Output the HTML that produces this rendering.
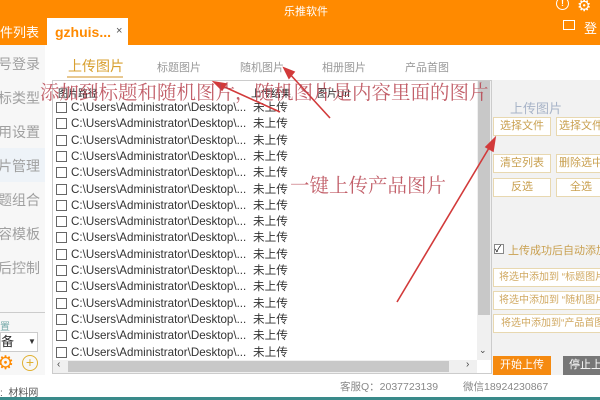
<!DOCTYPE html><html><head><meta charset="utf-8"><style>
*{margin:0;padding:0;box-sizing:border-box}
body{width:600px;height:400px;overflow:hidden;position:relative;background:#fff;font-family:"Liberation Sans","Noto Sans CJK SC",sans-serif;}
.a{position:absolute;white-space:nowrap}
.side{color:#a0a0a0;font-size:14px;left:-2px}
.st{font-size:11px;color:#999;top:59px}
.row{left:56px;font-size:11.6px;color:#333;height:16px;line-height:16px}
.cb{display:inline-block;width:11px;height:11px;border:1px solid #666;vertical-align:-2px;margin-right:4px;background:#fff}
.btn{position:absolute;border:1px solid #e8d8b0;background:#fff;color:#c9a050;font-size:11px;text-align:center;line-height:17px;height:19px;white-space:nowrap;overflow:hidden}
</style></head><body>
<div class="a" style="left:0;top:0;width:600px;height:45px;background:#ff8a00"></div>
<div class="a" style="left:284px;top:3px;color:#fff;font-size:11px">乐推软件</div>
<div class="a" style="left:0;top:22px;color:#fff;font-size:13px">件列表</div>
<div class="a" style="left:47px;top:18px;width:81px;height:27px;background:#fff"></div>
<div class="a" style="left:55px;top:24px;color:#ff8a00;font-size:14px;font-weight:bold">gzhuis...</div>
<div class="a" style="left:116px;top:25px;color:#555;font-size:11px">×</div>
<div class="a" style="left:556px;top:-3px;width:13px;height:13px;border:1.5px solid #fff;border-radius:50%;color:#fff;font-size:9px;text-align:center;line-height:10px;font-weight:bold">!</div>
<div class="a" style="left:577px;top:-4px;color:#fff;font-size:16px">⚙</div>
<div class="a" style="left:563px;top:20px;width:12px;height:10px;border:1.5px solid #fff"></div>
<div class="a" style="left:584px;top:18px;color:#fff;font-size:13px">登</div>
<div class="a" style="left:0;top:45px;width:45px;height:330px;background:#f7f7f7"></div>
<div class="a" style="left:0;top:148px;width:45px;height:34px;background:#eef3f8"></div>
<div class="a side" style="top:54px">号登录</div>
<div class="a side" style="top:88px">标类型</div>
<div class="a side" style="top:122px">用设置</div>
<div class="a side" style="top:156px">片管理</div>
<div class="a side" style="top:190px">题组合</div>
<div class="a side" style="top:224px">容模板</div>
<div class="a side" style="top:258px">后控制</div>
<div class="a" style="left:0;top:312px;width:45px;height:1px;background:#ccc"></div>
<div class="a" style="left:0;top:318px;font-size:10px;color:#7aa">置</div>
<div class="a" style="left:0;top:332px;width:38px;height:20px;border:1px solid #ccc;background:#fff;font-size:13px;line-height:18px;color:#333">备<span style="position:absolute;left:27px;top:0;font-size:8px;color:#333">▼</span></div>
<div class="a" style="left:-3px;top:352px;color:#ff8a00;font-size:19px">⚙</div>
<div class="a" style="left:22px;top:355px;width:16px;height:16px;border:1.5px solid #e0b030;border-radius:50%;color:#e0b030;font-size:14px;text-align:center;line-height:13px">+</div>
<div class="a" style="left:0;top:384px;font-size:10px;color:#555">:&nbsp; 材料网</div>
<div class="a" style="left:68px;top:56px;font-size:14px;color:#d8a030">上传图片</div>
<div class="a" style="left:67px;top:76px;width:56px;height:2px;background:#e8c890"></div>
<div class="a st" style="left:157px">标题图片</div>
<div class="a st" style="left:240px">随机图片</div>
<div class="a st" style="left:322px">相册图片</div>
<div class="a st" style="left:405px">产品首图</div>
<div class="a" style="left:52px;top:80px;width:440px;height:294px;border:1px solid #ccc;background:#fff"></div>
<div class="a" style="left:58px;top:85px;font-size:10px;color:#222">图片路径</div>
<div class="a" style="left:251px;top:85px;font-size:10px;color:#222">上传结果</div>
<div class="a" style="left:317px;top:85px;font-size:10px;color:#222">图片Url</div>
<div id="rows"></div>
<div class="a" style="left:477px;top:81px;width:14px;height:279px;background:#f0f0f0"></div>
<div class="a" style="left:478px;top:81px;width:12px;height:234px;background:#c8c8c8"></div>
<div class="a" style="left:479px;top:345px;font-size:9px;color:#444">⌄</div>
<div class="a" style="left:53px;top:360px;width:424px;height:13px;background:#f0f0f0"></div>
<div class="a" style="left:68px;top:361px;width:381px;height:11px;background:#c8c8c8"></div>
<div class="a" style="left:57px;top:359px;font-size:10px;color:#444">‹</div>
<div class="a" style="left:466px;top:359px;font-size:10px;color:#444">›</div>
<div class="a" style="left:492px;top:80px;width:108px;height:295px;background:#f2f2f2"></div>
<div class="a" style="left:510px;top:98px;font-size:13px;color:#a8b4c8">上传图片</div>
<div class="btn" style="left:493px;top:117px;width:58px">选择文件</div>
<div class="btn" style="left:556px;top:117px;width:50px">选择文件</div>
<div class="btn" style="left:493px;top:154px;width:58px">清空列表</div>
<div class="btn" style="left:556px;top:154px;width:50px">删除选中</div>
<div class="btn" style="left:493px;top:178px;width:58px">反选</div>
<div class="btn" style="left:556px;top:178px;width:50px">全选</div>
<div class="a" style="left:494px;top:244px;width:10px;height:10px;border:1px solid #888;background:#fff;font-size:9px;line-height:8px">✓</div>
<div class="a" style="left:508px;top:242px;font-size:11px;color:#c9a050">上传成功后自动添加</div>
<div class="btn" style="left:493px;top:268px;width:110px;text-align:left;padding-left:5px;font-size:10px;color:#d0a860">将选中添加到 “标题图片</div>
<div class="btn" style="left:493px;top:291px;width:110px;text-align:left;padding-left:5px;font-size:10px;color:#d0a860">将选中添加到 “随机图片</div>
<div class="btn" style="left:493px;top:314px;width:110px;text-align:left;padding-left:7px;font-size:10px;color:#d0a860">将选中添加到“产品首图</div>
<div class="a" style="left:493px;top:356px;width:58px;height:19px;background:#f58a10;color:#fff;font-size:11px;text-align:center;line-height:19px">开始上传</div>
<div class="a" style="left:563px;top:356px;width:40px;height:19px;background:#777;color:#fff;font-size:11px;line-height:19px;padding-left:6px">停止上</div>
<div class="a" style="left:340px;top:379px;font-size:10.5px;color:#888">客服Q：2037723139</div>
<div class="a" style="left:463px;top:379px;font-size:10.5px;color:#888">微信18924230867</div>
<div class="a" style="left:0;top:397px;width:600px;height:3px;background:#3a8a8a"></div>
<svg class="a" style="left:0;top:0" width="600" height="400">
<g stroke="#d23a3a" stroke-width="1.6" fill="#d23a3a">
<line x1="280" y1="112" x2="218" y2="84"/><polygon points="214,82 226,84 222,90"/>
<line x1="330" y1="118" x2="288" y2="72"/><polygon points="284,68 294,72 289,78"/>
<line x1="397" y1="302" x2="492" y2="143"/><polygon points="495,138 493,151 486,147"/>
</g>
<text x="40" y="99" font-family="Liberation Serif,Noto Serif CJK SC,serif" font-size="19.5" fill="#b84450" opacity="0.85">添加到标题和随机图片，随机图片是内容里面的图片</text>
<text x="290" y="192" font-family="Liberation Serif,Noto Serif CJK SC,serif" font-size="19.5" fill="#b84450" opacity="0.85">一键上传产品图片</text>
</svg>
<script>
var h='';for(var i=0;i<16;i++){var t=100+i*16.3;h+='<div class="a row" style="top:'+t+'px"><span class="cb"></span>C:\\Users\\Administrator\\Desktop\\...<span style="position:absolute;left:197px">未上传</span></div>';}
document.getElementById('rows').innerHTML=h;
</script>
</body></html>
